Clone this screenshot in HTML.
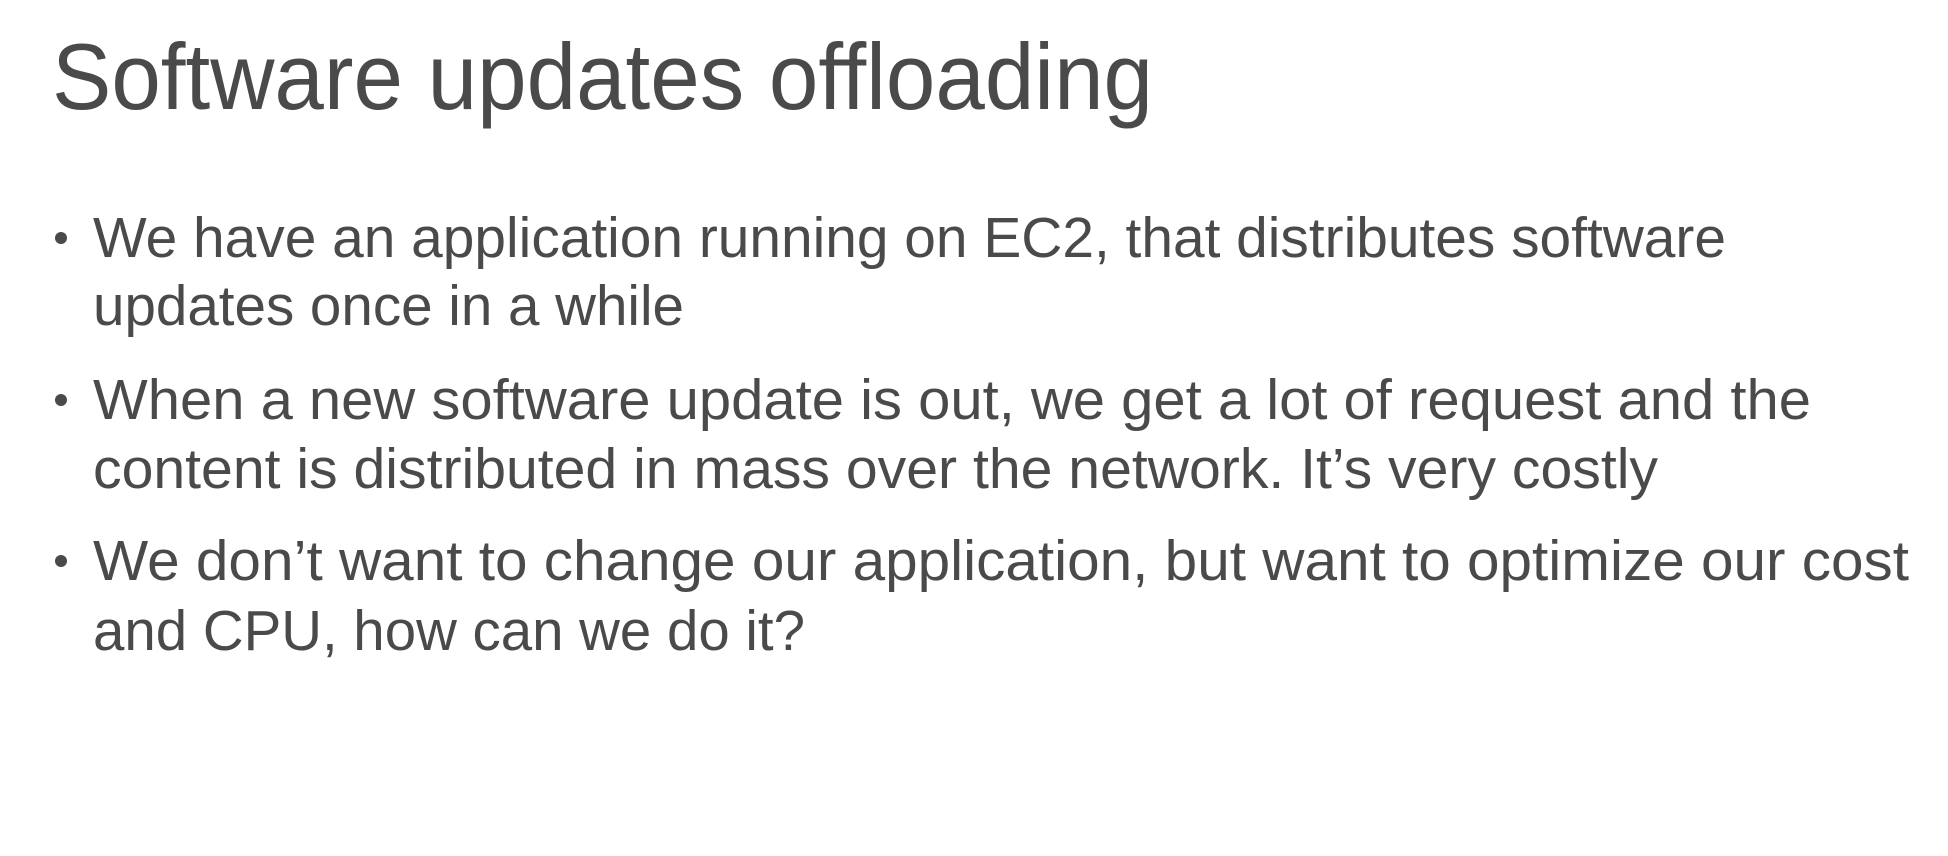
<!DOCTYPE html>
<html><head><meta charset="utf-8"><style>
html,body{margin:0;padding:0;background:#fff;width:1948px;height:856px;overflow:hidden}
svg{display:block}
text{font-family:"Liberation Sans",sans-serif;fill:#4a4a4a}
</style></head><body>
<svg width="1948" height="856" viewBox="0 0 1948 856">
<text x="52" y="109" font-size="94" textLength="1101" lengthAdjust="spacingAndGlyphs">Software updates offloading</text>
<g font-size="57">
<circle cx="61" cy="238" r="6" fill="#4a4a4a"/>
<text x="93" y="257" textLength="1633" lengthAdjust="spacingAndGlyphs">We have an application running on EC2, that distributes software</text>
<text x="93" y="325" textLength="591" lengthAdjust="spacingAndGlyphs">updates once in a while</text>
<circle cx="61" cy="400" r="6" fill="#4a4a4a"/>
<text x="93" y="419" textLength="1718" lengthAdjust="spacingAndGlyphs">When a new software update is out, we get a lot of request and the</text>
<text x="93" y="488" textLength="1565" lengthAdjust="spacingAndGlyphs">content is distributed in mass over the network. It’s very costly</text>
<circle cx="61" cy="561" r="6" fill="#4a4a4a"/>
<text x="93" y="580" textLength="1816" lengthAdjust="spacingAndGlyphs">We don’t want to change our application, but want to optimize our cost</text>
<text x="93" y="650" textLength="712" lengthAdjust="spacingAndGlyphs">and CPU, how can we do it?</text>
</g>
</svg>
</body></html>
